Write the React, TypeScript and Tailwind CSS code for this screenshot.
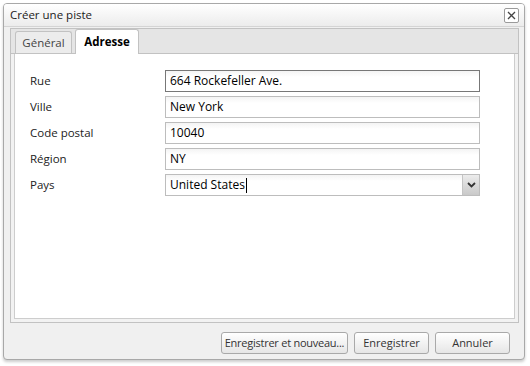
import { useState } from 'react'

const font = { fontFamily: '"Open Sans", "Liberation Sans", Arial, sans-serif' }

function Field({ label, value, focused, combo }: { label: string; value: string; focused?: boolean; combo?: boolean }) {
  return (
    <div className="flex items-center h-[22px]">
      <div className="w-[135px] text-[11.5px] text-[#222]">{label}</div>
      <div
        className={`flex w-[315px] h-[22px] border bg-gradient-to-b from-[#f4f4f4] to-white to-[30%] ${
          focused ? 'border-[#777]' : 'border-[#bdbdbd]'
        }`}
      >
        <div className="flex-1 flex items-center pl-[4px] text-[12px] text-black">
          {value}
          {combo && <span className="inline-block w-px h-[15px] bg-black ml-px" />}
        </div>
        {combo && (
          <div className="w-[17px] h-full border-l border-[#c4c4c4] bg-gradient-to-b from-[#ececec] to-[#c9c9c9] flex items-center justify-center">
            <svg width="9" height="6" viewBox="0 0 9 6">
              <path d="M1 1 L4.5 4.5 L8 1" fill="none" stroke="#333" strokeWidth="1.8" />
            </svg>
          </div>
        )}
      </div>
    </div>
  )
}

function Button({ children, width, tight }: { children: React.ReactNode; width: string; tight?: boolean }) {
  return (
    <button
      className={`${width} ${tight ? 'tracking-[-0.25px]' : ''} h-[22px] px-0 whitespace-nowrap rounded-[3px] border border-[#a9a9a9] bg-gradient-to-b from-white to-[#e6e6e6] text-[11px] text-[#333]`}
    >
      {children}
    </button>
  )
}

export default function App() {
  const [tab, setTab] = useState('adresse')

  return (
    <div className="w-[530px] h-[366px] bg-white pt-[3px] pl-[3px]" style={font}>
      <div className="w-[522px] h-[357px] rounded-[4px] border border-[#a8a8a8] bg-[#f0f0f0] shadow-[0_2px_3px_rgba(0,0,0,0.2)] flex flex-col overflow-hidden">
        <div className="h-[23px] flex items-center justify-between pl-[6px] pr-[5px] bg-gradient-to-b from-white to-[#ececec] border-b border-[#d4d4d4]">
          <span className="text-[11.5px] text-[#222]">Créer une piste</span>
          <div className="w-[15px] h-[15px] rounded-[2px] border border-[#9a9a9a] bg-white flex items-center justify-center">
            <svg width="9" height="9" viewBox="0 0 9 9">
              <path d="M1 1 L8 8 M8 1 L1 8" stroke="#444" strokeWidth="1.3" />
            </svg>
          </div>
        </div>

        <div className="mt-px ml-[6px] mr-[5px] h-[295px] border border-[#c2c2c2] bg-[#f2f2f2] flex flex-col">
          <div className="h-[25px] bg-[#e5e5e5] border-b border-[#c2c2c2] flex items-end pl-[4px] gap-[3px]">
            <button
              onClick={() => setTab('general')}
              className={`w-[57px] rounded-t-[3px] border border-[#c2c2c2] border-b-0 text-[11.5px] ${
                tab === 'general' ? 'h-[24px] bg-white font-bold text-black' : 'h-[22px] bg-[#ececec] text-[#444]'
              }`}
            >
              Général
            </button>
            <button
              onClick={() => setTab('adresse')}
              className={`w-[64px] rounded-t-[3px] border border-[#c2c2c2] border-b-0 text-[11.5px] -mb-px ${
                tab === 'adresse' ? 'h-[25px] bg-white font-bold text-black' : 'h-[22px] bg-[#ececec] text-[#444]'
              }`}
            >
              Adresse
            </button>
          </div>
          <div className="flex-1 mx-[3px] mb-[3px] bg-white border border-t-0 border-[#cdcdcd] pt-[16px] pl-[15px] flex flex-col gap-[4px]">
            <Field label="Rue" value="664 Rockefeller Ave." focused />
            <Field label="Ville" value="New York" />
            <Field label="Code postal" value="10040" />
            <Field label="Région" value="NY" />
            <Field label="Pays" value="United States" combo />
          </div>
        </div>

        <div className="flex justify-end gap-[6px] pr-[14px] pt-[9px]">
          <Button width="w-[127px]" tight>Enregistrer et nouveau...</Button>
          <Button width="w-[75px]">Enregistrer</Button>
          <Button width="w-[75px]">Annuler</Button>
        </div>
      </div>
    </div>
  )
}
